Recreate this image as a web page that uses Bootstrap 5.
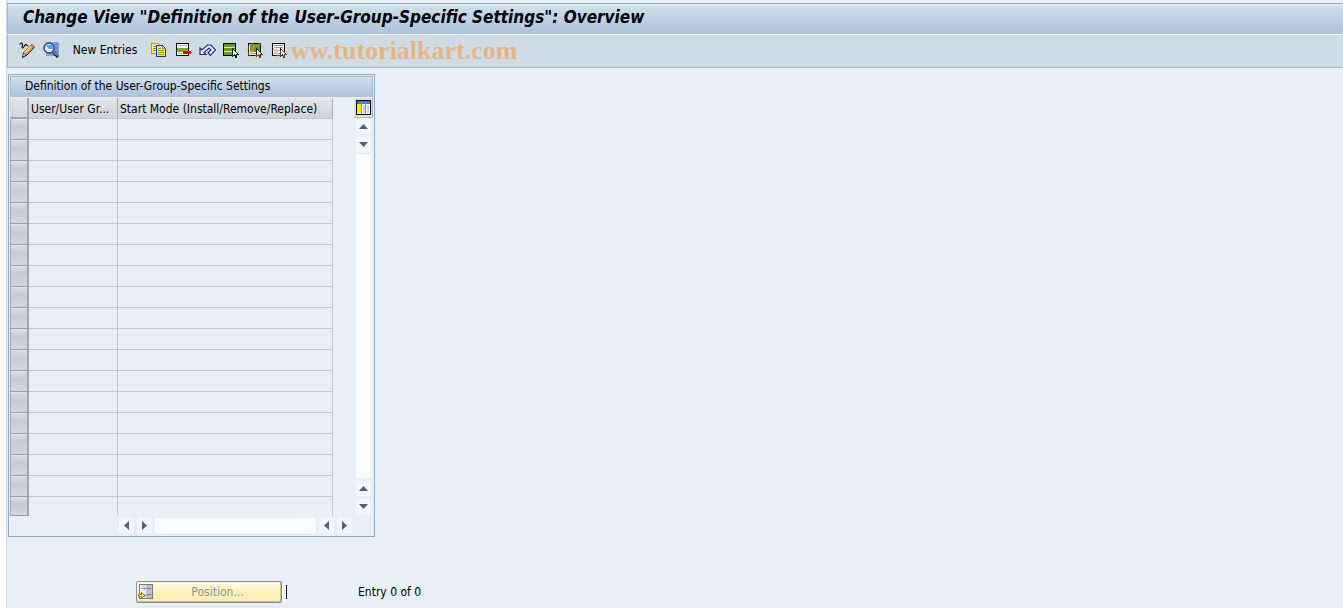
<!DOCTYPE html>
<html lang="en">
<head>
<meta charset="utf-8">
<meta name="viewport" content="width=device-width, initial-scale=1">
<title>Change View "Definition of the User-Group-Specific Settings": Overview</title>
<link href="https://cdn.jsdelivr.net/npm/bootstrap@5.3.0/dist/css/bootstrap.min.css" rel="stylesheet">
<style>
body{background:#fff;color:#000;font:12px/16px "DejaVu Sans Condensed","Noto Sans",sans-serif;overflow-x:hidden}
.screen{margin-left:6px;border-left:1px solid #cfdae6;background:#e8eff6;padding-top:3px}
.title-bar{height:32px;border-top:1px solid #96a7b9;border-left:1px solid #a4b6c8;border-bottom:1px solid #edf3f8;background:linear-gradient(#e4eef5 0 1px,#cfdfeb 2px,#abc2da);padding-left:15px}
.title-bar h1{font-size:17px;line-height:20px;font-weight:700;font-style:italic;margin:0;padding-bottom:4px}
.tool-bar{height:33px;background:#cfdce6;border-left:1px solid #a4b6c8;border-bottom:1px solid #a4b6c8;padding:0 0 2px 7px}
.tool-bar .btn{width:24px;height:24px;padding:0;border:0;border-radius:0;font-size:12px;line-height:16px;color:#000;display:flex;align-items:center;justify-content:center}
.tool-bar .btn.wide{width:84px}
svg{display:block;flex:none}
.watermark{position:absolute;left:238px;top:0;font:700 26px/32px "Liberation Serif",serif;color:#e7b484;white-space:nowrap;pointer-events:none}
.watermark span{opacity:.4}
.panel{width:367px;border:1px solid #8bacca;margin:6px 0 0 1px;padding:1px}
.panel h2{font-size:12px;line-height:19px;height:21px;margin:0;padding-left:14px;border:1px solid #a5b9cd;border-bottom:0;background:linear-gradient(#cfdfeb,#abc2da)}
.grid{width:323px;table-layout:fixed;border-collapse:separate;border-spacing:0;margin-top:1px}
.grid td,.grid th{padding:0 0 0 2px;height:21px;font-weight:400;white-space:nowrap;overflow:hidden;border-right:1px solid #bcc6d5;border-bottom:1px solid #bcc6d5}
.grid thead th{padding-top:2px;background:linear-gradient(#e3e6e8,#cfd4d8);border-right-color:#a5adb6}
.grid .sel{background:linear-gradient(#d9dee2,#c7ccd4 40%,#d2d7dc);border-right:2px solid #9da8b7;border-bottom:1px solid #929daf;border-left:1px solid #a3adba;box-shadow:inset 0 1px #e4e8ec}
.grid thead .sel{background:linear-gradient(#e3e6e8,#d2d6da);border-bottom:2px solid #98a4b4;border-left-color:#cdd4db}
.grid tbody tr:last-child td{border-bottom:0}
.grid tbody tr:last-child>*{height:19px}
.side{width:19px;padding-top:1px}
.side .config{width:19px;height:20px;padding:0;border:0;border-right:1px solid #aab2bb;border-bottom:1px solid #aab2bb;border-radius:0;background:#dce1e6;display:flex;align-items:center;justify-content:center}
.arrow{width:15px;height:15px;padding:0;border:0;border-radius:0;background:#f2f6fa;display:flex;align-items:center;justify-content:center;flex:none}
.track{background:#fbfcfd}
.v-scroll{width:15px;gap:3px;margin:1px 0 2px 2px}
.h-scroll{gap:3px;margin:2px 0 2px 109px;width:233px}
.foot{margin:44px 0 0 129px;padding-bottom:5px}
.position{width:146px;height:22px;border:1px solid #8e8f8d;border-radius:2px;padding:0 0 0 1px;background:linear-gradient(#fffbe9,#fff1bd 50%,#fbedb8);box-shadow:inset -1px -1px #cdbd83;color:#929292;font-size:12px;line-height:18px}
.position span{flex:1}
.caret{width:60px;height:14px;margin-left:4px;border:0;border-left:1px solid #000;padding:0;background:transparent;outline:0}
.entry-count{padding-left:12px}
</style>
<script src="https://cdn.jsdelivr.net/npm/bootstrap@5.3.0/dist/js/bootstrap.bundle.min.js"></script>
</head>
<body>
<main class="screen min-vh-100">
<header class="title-bar d-flex align-items-center"><h1 class="text-nowrap">Change View "Definition of the User-Group-Specific Settings": Overview</h1></header>
<nav class="tool-bar d-flex align-items-center position-relative" aria-label="Application toolbar">
<button class="btn" aria-label="Display or change"><svg width="16" height="16" viewBox="0 0 16 16"><path d="M.5 2.500c1-2 3-2 3 0s-1 3 0 3.500 2-3 3-3.500 1 2 2.500 1" fill="none" stroke="#111" stroke-width="1.200"/><path d="M3.500 15.500l1.500-5 7.500-8 3 2.500-7.500 8z" fill="#f7a13c" stroke="#111"/><path d="M5.500 11l7-7.500" stroke="#ffe27b" stroke-width="1.500"/><path d="M3.500 15l1-4 3 2z" fill="#fff" stroke="#111" stroke-width=".7"/><path d="M11.500 3.500l1.500-1.500 2.500 2-1.500 2z" fill="#e0702f"/></svg></button>
<button class="btn" aria-label="Display detail"><svg width="16" height="16" viewBox="0 0 16 16"><path d="M3 0h13v14H3z" fill="#79a6d4"/><path d="M12 1h3v2h-3zM12 5h3v2h-3zM12 9h3v2h-3z" fill="#5c93cf"/><circle cx="6" cy="6" r="5" fill="#d7ecfc" stroke="#314b69" stroke-width="1.500"/><path d="M3 3h6l1 4H6z" fill="#4da5ee"/><path d="M3 8l2 2 4-1-2-2z" fill="#fff"/><path d="M10 10l5 5" stroke="#1c2938" stroke-width="3"/><path d="M10 9.500l4 4" stroke="#d7e8f6"/></svg></button>
<button class="btn wide">New Entries</button>
<button class="btn" aria-label="Copy as"><svg width="16" height="16" viewBox="0 0 16 16" shape-rendering="crispEdges"><path d="M.5 1.500h7l2 2v8h-9z" fill="#ffe97b" stroke="#c39600"/><path d="M2 4h3M2 6h3M2 8h3" stroke="#b78c00"/><path d="M5.500 3.500h6l3 3v8h-9z" fill="#fff34b" stroke="#1830c8"/><path d="M11.500 3.500v3h3M7 6.500h3M7 8.500h6M7 10.500h6M7 12.500h6" fill="none" stroke="#8f934b"/></svg></button>
<button class="btn" aria-label="Delete"><svg width="16" height="16" viewBox="0 0 16 16" shape-rendering="crispEdges"><path d="M1.500 1.500h12v12h-12z" fill="#f5f7f5" stroke="#000"/><path d="M3 3.500h9M3 11.500h4" stroke="#b9bebe"/><path d="M2 6h11v4H2z" fill="#83aa24"/><path d="M8 9h8v3H8z" fill="#e90000"/></svg></button>
<button class="btn" aria-label="Undo change"><svg width="17" height="16" viewBox="0 0 17 16"><path d="M1 12.500V6l2 2 5.500-5h3.500l4.500 5-5 5.500-2.500-2.500L12 8 10 6 5 10.500l2 2z" fill="#e9edfb" stroke="#27278a" stroke-width="1.200"/></svg></button>
<button class="btn" aria-label="Select all"><svg width="16" height="16" viewBox="0 0 16 16" shape-rendering="crispEdges"><path d="M.5 1.500h12v12H.5z" fill="#dfe9c4" stroke="#000"/><path d="M1 2h11v3H1zM1 6h11v3H1zM1 10h11v3H1z" fill="#6b9a18"/><path d="M9.500 6.500v8l2-2 1.500 3 1-.5-1-3h2z" fill="#fff" stroke="#222"/></svg></button>
<button class="btn" aria-label="Select block"><svg width="16" height="16" viewBox="0 0 16 16" shape-rendering="crispEdges"><path d="M1.500 1.500h12v12h-12z" fill="#f3eee8" stroke="#000"/><path d="M3 2h10v8H3z" fill="#6e9517"/><path d="M3 11.500h6" stroke="#9c968e"/><path d="M9.500 6.500v8l2-2 1.500 3 1-.5-1-3h2z" fill="#fff" stroke="#222"/></svg></button>
<button class="btn" aria-label="Deselect all"><svg width="16" height="16" viewBox="0 0 16 16" shape-rendering="crispEdges"><path d="M1.500 1.500h12v12h-12z" fill="#f5f8fa" stroke="#000"/><path d="M3 3.500h9M3 5.500h9M3 8.500h6M3 11.500h6" stroke="#8fa2b4"/><path d="M9.500 6.500v8l2-2 1.500 3 1-.5-1-3h2z" fill="#fff" stroke="#222"/></svg></button>
<div class="watermark" aria-hidden="true"><span>© w</span>ww.tutorialkart.com</div>
</nav>
<section class="panel">
<h2>Definition of the User-Group-Specific Settings</h2>
<div class="d-flex justify-content-between">
<table class="grid">
<colgroup><col style="width:19px"><col style="width:89px"><col style="width:215px"></colgroup>
<thead><tr><th class="sel" aria-label="Row selection"></th><th scope="col">User/User Gr...</th><th scope="col">Start Mode (Install/Remove/Replace)</th></tr></thead>
<tbody>
<tr><th class="sel"></th><td></td><td></td></tr>
<tr><th class="sel"></th><td></td><td></td></tr>
<tr><th class="sel"></th><td></td><td></td></tr>
<tr><th class="sel"></th><td></td><td></td></tr>
<tr><th class="sel"></th><td></td><td></td></tr>
<tr><th class="sel"></th><td></td><td></td></tr>
<tr><th class="sel"></th><td></td><td></td></tr>
<tr><th class="sel"></th><td></td><td></td></tr>
<tr><th class="sel"></th><td></td><td></td></tr>
<tr><th class="sel"></th><td></td><td></td></tr>
<tr><th class="sel"></th><td></td><td></td></tr>
<tr><th class="sel"></th><td></td><td></td></tr>
<tr><th class="sel"></th><td></td><td></td></tr>
<tr><th class="sel"></th><td></td><td></td></tr>
<tr><th class="sel"></th><td></td><td></td></tr>
<tr><th class="sel"></th><td></td><td></td></tr>
<tr><th class="sel"></th><td></td><td></td></tr>
<tr><th class="sel"></th><td></td><td></td></tr>
<tr><th class="sel"></th><td></td><td></td></tr>
</tbody>
</table>
<div class="side d-flex flex-column">
<button class="config" aria-label="Table settings"><svg width="15" height="15" viewBox="0 0 15 15" shape-rendering="crispEdges"><path d="M.5.5h14v14H.5z" fill="#fff" stroke="#000"/><path d="M1 1h13v3H1z" fill="#3f7fc0"/><path d="M1 4h5v9H1z" fill="#ffe600"/><path d="M7 5h2v8H7zM11 5h2v8h-2z" fill="#c9cdd3"/><path d="M5.500 2v12M9.500 2v12" stroke="#8a969f"/></svg></button>
<div class="v-scroll d-flex flex-column flex-fill">
<button class="arrow" aria-label="Scroll to top"><svg width="9" height="5"><path d="M0 5l4.500-5L9 5z" fill="#4d6270"/></svg></button>
<button class="arrow" aria-label="Scroll up"><svg width="9" height="5"><path d="M0 0l4.500 5L9 0z" fill="#4d6270"/></svg></button>
<div class="track flex-fill"></div>
<button class="arrow" aria-label="Scroll down"><svg width="9" height="5"><path d="M0 5l4.500-5L9 5z" fill="#4d6270"/></svg></button>
<button class="arrow" aria-label="Scroll to bottom"><svg width="9" height="5"><path d="M0 0l4.500 5L9 0z" fill="#4d6270"/></svg></button>
</div>
</div>
</div>
<div class="h-scroll d-flex">
<button class="arrow" aria-label="Scroll left"><svg width="5" height="9"><path d="M5 0L0 4.500 5 9z" fill="#4d6270"/></svg></button>
<button class="arrow" aria-label="Scroll right"><svg width="5" height="9"><path d="M0 0l5 4.500L0 9z" fill="#4d6270"/></svg></button>
<div class="track flex-fill"></div>
<button class="arrow" aria-label="Page left"><svg width="5" height="9"><path d="M5 0L0 4.500 5 9z" fill="#4d6270"/></svg></button>
<button class="arrow" aria-label="Page right"><svg width="5" height="9"><path d="M0 0l5 4.500L0 9z" fill="#4d6270"/></svg></button>
</div>
</section>
<div class="foot d-flex align-items-center">
<button class="position btn d-flex align-items-center"><svg width="16" height="16" viewBox="0 0 16 16" shape-rendering="crispEdges"><path d="M1.500.5h13v14h-13z" fill="#e9e9f4" stroke="#77777f"/><path d="M8 1h6v13H8z" fill="#bcbcd8"/><path d="M9 4.500h4M9 10.500h4" stroke="#77777f"/><path d="M3 4.500h4M5.500 2.500l2 2-2 2" fill="none" stroke="#a0a0a8"/><path d="M.5 10.500h3v-2l3.500 3-3.500 3v-2h-3z" fill="#fff23b" stroke="#8b8a3a"/></svg><span>Position...</span></button>
<input class="caret" aria-label="Position entry">
<span class="entry-count">Entry 0 of 0</span>
</div>
</main>
</body>
</html>
